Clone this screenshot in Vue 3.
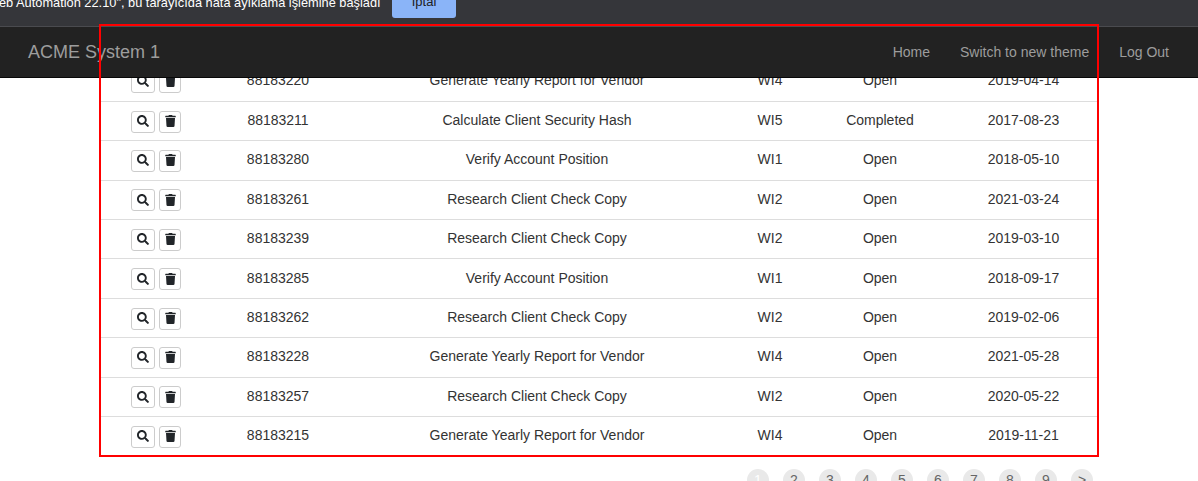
<template>
  <div class="pagina">
    <div class="barra-aviso">
      <span class="aviso-texto">eb Automation 22.10", bu tarayıcıda hata ayıklama işlemine başladı</span>
      <button class="btn-iptal">İptal</button>
    </div>

    <nav class="navbar">
      <span class="marca">ACME System 1</span>
      <div class="enlaces">
        <a>Home</a>
        <a>Switch to new theme</a>
        <a>Log Out</a>
      </div>
    </nav>

    <div class="contenido">
      <table class="tabla">
        <colgroup>
          <col class="c1" /><col class="c2" /><col class="c3" /><col class="c4" /><col class="c5" /><col class="c6" />
        </colgroup>
        <tbody>
          <tr v-for="fila in filas" :key="fila.id">
            <td>
              <div class="acciones">
                <button class="btn-icono">
                  <svg width="12" height="12" viewBox="0 0 512 512"><path fill="#212529" d="M505 442.700L405.300 343c-4.500-4.500-10.600-7-17-7H372c27.600-35.300 44-79.700 44-128C416 93.100 322.900 0 208 0S0 93.100 0 208s93.100 208 208 208c48.300 0 92.700-16.400 128-44v16.300c0 6.400 2.500 12.500 7 17l99.700 99.700c9.400 9.400 24.600 9.400 33.900 0l28.300-28.300c9.400-9.400 9.400-24.600.1-34zM208 336c-70.700 0-128-57.200-128-128 0-70.700 57.200-128 128-128 70.700 0 128 57.200 128 128 0 70.700-57.200 128-128 128z"/></svg>
                </button>
                <button class="btn-icono estrecho">
                  <svg width="11" height="12" viewBox="0 0 448 512"><path fill="#212529" d="M432 32H312l-9.400-18.700A24 24 0 0 0 281.100 0H166.800a23.700 23.700 0 0 0-21.400 13.300L136 32H16A16 16 0 0 0 0 48v32a16 16 0 0 0 16 16h416a16 16 0 0 0 16-16V48a16 16 0 0 0-16-16zM53.200 467a48 48 0 0 0 47.900 45h245.800a48 48 0 0 0 47.900-45L416 128H32z"/></svg>
                </button>
              </div>
            </td>
            <td>{{ fila.id }}</td>
            <td>{{ fila.titulo }}</td>
            <td>{{ fila.tipo }}</td>
            <td>{{ fila.estado }}</td>
            <td>{{ fila.fecha }}</td>
          </tr>
        </tbody>
      </table>

      <div class="paginacion">
        <span v-for="p in paginas" :key="p" class="pag" :class="{ activa: p === '1' }">{{ p }}</span>
      </div>
    </div>

    <!-- Recuadro rojo de la captura -->
    <div class="recuadro"></div>
  </div>
</template>

<script setup>
const filas = [
  { id: '88183220', titulo: 'Generate Yearly Report for Vendor', tipo: 'WI4', estado: 'Open', fecha: '2019-04-14' },
  { id: '88183211', titulo: 'Calculate Client Security Hash', tipo: 'WI5', estado: 'Completed', fecha: '2017-08-23' },
  { id: '88183280', titulo: 'Verify Account Position', tipo: 'WI1', estado: 'Open', fecha: '2018-05-10' },
  { id: '88183261', titulo: 'Research Client Check Copy', tipo: 'WI2', estado: 'Open', fecha: '2021-03-24' },
  { id: '88183239', titulo: 'Research Client Check Copy', tipo: 'WI2', estado: 'Open', fecha: '2019-03-10' },
  { id: '88183285', titulo: 'Verify Account Position', tipo: 'WI1', estado: 'Open', fecha: '2018-09-17' },
  { id: '88183262', titulo: 'Research Client Check Copy', tipo: 'WI2', estado: 'Open', fecha: '2019-02-06' },
  { id: '88183228', titulo: 'Generate Yearly Report for Vendor', tipo: 'WI4', estado: 'Open', fecha: '2021-05-28' },
  { id: '88183257', titulo: 'Research Client Check Copy', tipo: 'WI2', estado: 'Open', fecha: '2020-05-22' },
  { id: '88183215', titulo: 'Generate Yearly Report for Vendor', tipo: 'WI4', estado: 'Open', fecha: '2019-11-21' }
]

const paginas = ['1', '2', '3', '4', '5', '6', '7', '8', '9', '>']
</script>

<style>
html, body {
  margin: 0;
  overflow: hidden;
}
</style>

<style scoped>
.pagina {
  position: relative;
  width: 1198px;
  height: 481px;
  overflow: hidden;
  background: #fff;
  font-family: "Liberation Sans", Arial, sans-serif;
  font-size: 14px;
  color: #333;
}

.barra-aviso {
  height: 26px;
  background: #35363a;
  display: flex;
  overflow: hidden;
  color: #fff;
  font-size: 12.800px;
}

.aviso-texto {
  margin-left: -1px;
  margin-top: -4px;
  line-height: 14px;
  width: 393px;
  white-space: nowrap;
}

.btn-iptal {
  width: 64px;
  height: 18px;
  box-sizing: border-box;
  border: none;
  border-radius: 0 0 3px 3px;
  background: #8ab4f8;
  color: #202124;
  font-family: inherit;
  font-size: 13px;
  padding: 0 0 14px;
  line-height: 4px;
  display: block;
}

.navbar {
  position: relative;
  z-index: 2;
  height: 52px;
  box-sizing: border-box;
  background: #222;
  border-top: 1px solid #4a4b4f;
  border-bottom: 1px solid #080808;
  display: flex;
  align-items: center;
  justify-content: space-between;
  padding: 0 29px 0 28px;
  color: #9d9d9d;
}

.marca {
  font-size: 18px;
}

.enlaces {
  display: flex;
  gap: 30px;
}

.contenido {
  margin-top: -16px;
  padding: 0 101px;
}

.tabla {
  width: 997px;
  border-collapse: collapse;
  table-layout: fixed;
  text-align: center;
}

.c1 { width: 110px; }
.c2 { width: 134px; }
.c3 { width: 384px; }
.c4 { width: 82px; }
.c5 { width: 138px; }
.c6 { width: 149px; }

.tabla td {
  height: 39.400px;
  box-sizing: border-box;
  padding: 0 0 2.200px;
  border-bottom: 1px solid #ddd;
}

.tabla tr:last-child td {
  border-bottom: none;
}

.acciones {
  display: flex;
  justify-content: center;
  gap: 4px;
  margin-top: 3.200px;
}

.btn-icono {
  width: 24px;
  height: 22px;
  padding: 0 0 1px;
  background: #fff;
  border: 1px solid #ccc;
  border-radius: 3px;
  display: flex;
  align-items: center;
  justify-content: center;
}

.btn-icono.estrecho {
  width: 22px;
}

.paginacion {
  display: flex;
  justify-content: flex-end;
  gap: 14px;
  margin-top: 13px;
  padding-right: 4px;
}

.pag {
  width: 22px;
  height: 22px;
  border-radius: 50%;
  background: #e9e9e9;
  color: #666;
  text-align: center;
  line-height: 22px;
}

.pag.activa {
  color: #fff;
}

.recuadro {
  position: absolute;
  z-index: 3;
  left: 99px;
  top: 24px;
  width: 1000px;
  height: 433px;
  box-sizing: border-box;
  border: 2px solid #f00;
  pointer-events: none;
}
</style>
